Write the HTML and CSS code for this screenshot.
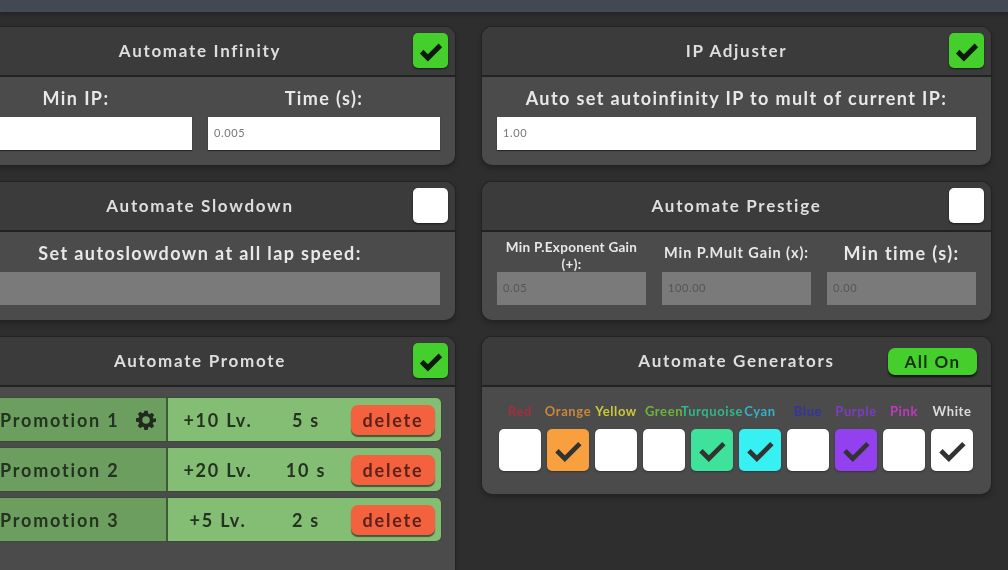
FILE: index.html
```html
<!DOCTYPE html>
<html lang="en">
<head>
<meta charset="utf-8">
<title>Automation</title>
<link rel="stylesheet" href="styles.css">
</head>
<body>
<div class="page">
  <div class="topbar"></div>
  <main class="columns">
    <section class="card">
      <header class="card-head"><h2>Automate Infinity</h2><span class="toggle on"><svg viewBox="0 0 24 24"><path d="M4.500 12.500 9.500 17.500 19.500 7.500"/></svg></span></header>
      <div class="card-body fields">
        <label class="field"><span class="field-label">Min IP:</span><span class="input"></span></label>
        <label class="field"><span class="field-label">Time (s):</span><span class="input">0.005</span></label>
      </div>
    </section>
    <section class="card">
      <header class="card-head"><h2>IP Adjuster</h2><span class="toggle on"><svg viewBox="0 0 24 24"><path d="M4.500 12.500 9.500 17.500 19.500 7.500"/></svg></span></header>
      <div class="card-body fields">
        <label class="field"><span class="field-label">Auto set autoinfinity IP to mult of current IP:</span><span class="input">1.00</span></label>
      </div>
    </section>
    <section class="card">
      <header class="card-head"><h2>Automate Slowdown</h2><span class="toggle"></span></header>
      <div class="card-body fields">
        <label class="field"><span class="field-label">Set autoslowdown at all lap speed:</span><span class="input off"></span></label>
      </div>
    </section>
    <section class="card">
      <header class="card-head"><h2>Automate Prestige</h2><span class="toggle"></span></header>
      <div class="card-body fields">
        <label class="field"><span class="field-label tiny">Min P.Exponent Gain (+):</span><span class="input off">0.05</span></label>
        <label class="field"><span class="field-label small">Min P.Mult Gain (x):</span><span class="input off">100.00</span></label>
        <label class="field"><span class="field-label">Min time (s):</span><span class="input off">0.00</span></label>
      </div>
    </section>
    <section class="card tall">
      <header class="card-head"><h2>Automate Promote</h2><span class="toggle on"><svg viewBox="0 0 24 24"><path d="M4.500 12.500 9.500 17.500 19.500 7.500"/></svg></span></header>
      <div class="card-body rows">
        <div class="promo">
          <div class="promo-name"><span>Promotion 1</span>
            <svg class="gear" viewBox="0 0 24 24"><path d="M10 1h4l.6 3.200 1.800.8 2.700-1.800 2.800 2.800-1.800 2.700.8 1.800L24 10v4l-3.200.6-.8 1.800 1.800 2.700-2.800 2.800-2.700-1.800-1.800.8L14 24h-4l-.6-3.200-1.800-.8-2.700 1.800-2.800-2.800 1.800-2.700-.8-1.800L0 14v-4l3.200-.6.8-1.800-1.800-2.700 2.800-2.800 2.700 1.800 1.800-.8zM12 7.500a4.500 4.500 0 1 0 0 9 4.500 4.500 0 0 0 0-9z" fill-rule="evenodd"/></svg>
          </div>
          <div class="promo-info"><span class="lv">+10 Lv.</span><span class="sec">5 s</span><span class="del">delete</span></div>
        </div>
        <div class="promo">
          <div class="promo-name"><span>Promotion 2</span></div>
          <div class="promo-info"><span class="lv">+20 Lv.</span><span class="sec">10 s</span><span class="del">delete</span></div>
        </div>
        <div class="promo">
          <div class="promo-name"><span>Promotion 3</span></div>
          <div class="promo-info"><span class="lv">+5 Lv.</span><span class="sec">2 s</span><span class="del">delete</span></div>
        </div>
      </div>
    </section>
    <section class="card gens">
      <header class="card-head"><h2>Automate Generators</h2><span class="all-on">All On</span></header>
      <div class="card-body swatches">
        <div class="gen"><span class="gen-name red">Red</span><span class="box"></span></div>
        <div class="gen"><span class="gen-name orange">Orange</span><span class="box b-orange"><svg viewBox="0 0 24 24"><path d="M5 12.500 10 17.500 19.500 8"/></svg></span></div>
        <div class="gen"><span class="gen-name yellow">Yellow</span><span class="box"></span></div>
        <div class="gen"><span class="gen-name green">Green</span><span class="box"></span></div>
        <div class="gen"><span class="gen-name turq">Turquoise</span><span class="box b-turq"><svg viewBox="0 0 24 24"><path d="M5 12.500 10 17.500 19.500 8"/></svg></span></div>
        <div class="gen"><span class="gen-name cyan">Cyan</span><span class="box b-cyan"><svg viewBox="0 0 24 24"><path d="M5 12.500 10 17.500 19.500 8"/></svg></span></div>
        <div class="gen"><span class="gen-name blue">Blue</span><span class="box"></span></div>
        <div class="gen"><span class="gen-name purple">Purple</span><span class="box b-purple"><svg viewBox="0 0 24 24"><path d="M5 12.500 10 17.500 19.500 8"/></svg></span></div>
        <div class="gen"><span class="gen-name pink">Pink</span><span class="box"></span></div>
        <div class="gen"><span class="gen-name white">White</span><span class="box"><svg viewBox="0 0 24 24"><path d="M5 12.500 10 17.500 19.500 8"/></svg></span></div>
      </div>
    </section>
  </main>
</div>
</body>
</html>
```
FILE: styles.css
```css
* { box-sizing: border-box; }
html, body { margin: 0; height: 100%; overflow: hidden; background: #2e2e2e; }
.page {
  width: 1008px; height: 570px; overflow: hidden; background: #2e2e2e;
  font-family: "Lato", "Liberation Sans", sans-serif;
  filter: blur(0.7px);
}
.topbar { height: 12px; background: #434953; box-shadow: 0 2px 4px #222; }
.columns {
  display: grid; grid-template-columns: 510px 509px; grid-template-rows: 138px 138px auto;
  column-gap: 27px; row-gap: 17px; margin: 15px 0 0 -55px; align-items: start;
}
.card {
  height: 138px; border-radius: 10px; overflow: hidden; background: #4b4b4b;
  box-shadow: 0 0 0 1px #232323, 0 3px 5px #222;
  display: flex; flex-direction: column;
}
.card.tall { height: 300px; }
.card.gens { height: 157px; }
.card-head {
  height: 50px; flex: none; padding-bottom: 2px; background: #3b3b3b; border-bottom: 2px solid #222;
  display: flex; align-items: center; justify-content: center; position: relative;
}
.card-head h2 {
  margin: 0; font-size: 17px; font-weight: 700; letter-spacing: 1.7px; color: #dedede;
}
.toggle {
  position: absolute; right: 7px; top: 6px; width: 35px; height: 35px; border-radius: 5px;
  background: #fff; display: flex; align-items: center; justify-content: center;
  box-shadow: 0 1px 2px #1c1c1c;
}
.toggle.on { background: #45cf2c; }
.toggle svg { width: 30px; height: 30px; }
.toggle svg path { fill: none; stroke: #0e1a0c; stroke-width: 4; }
.card-body { flex: 1; min-height: 0; }
.fields { display: flex; gap: 16px; padding: 7px 15px 0; }
.field { flex: 1 1 0; min-width: 0; display: flex; flex-direction: column; }
.field-label {
  height: 33px; padding-bottom: 5px; display: flex; align-items: center; justify-content: center; text-align: center;
  font-size: 18px; font-weight: 700; letter-spacing: 1.4px; color: #e8e8e8; line-height: 16px;
}
.field-label.small { font-size: 14.500px; letter-spacing: .9px; white-space: nowrap; }
.field-label.tiny { font-size: 13.500px; letter-spacing: .3px; padding-bottom: 0; line-height: 17px; }
.input {
  height: 33px; background: #fff; color: #777; font-size: 11px; letter-spacing: .6px;
  display: flex; align-items: center; padding: 0 0 2px 6px; box-shadow: 0 1px 1px #2a2a2a;
}
.input.off { background: #7a7a7a; color: #555; box-shadow: none; }
.rows { display: flex; flex-direction: column; gap: 7px; padding: 11px 14px 0; }
.promo {
  height: 43px; display: flex; border-radius: 5px; overflow: hidden; background: #84bd74;
  box-shadow: 0 0 0 1px #3c4c38;
}
.promo-name {
  width: 209px; flex: none; background: #6c9e5f; border-right: 2px solid #3f5a39; padding: 0 10px 0 41px;
  display: flex; align-items: center; justify-content: space-between;
  font-size: 18px; font-weight: 700; letter-spacing: 1.8px; color: #24331f;
}
.gear { width: 20px; height: 20px; fill: #20291d; }
.promo-info { flex: 1; display: flex; align-items: center; font-size: 18px; font-weight: 700; letter-spacing: 1.8px; color: #24331f; }
.lv { width: 100px; text-align: center; }
.sec { width: 76px; text-align: center; }
.del {
  width: 84px; height: 30px; margin-left: 7px; border-radius: 7px; background: #f4613f; color: #5a221a;
  display: flex; align-items: center; justify-content: center;
  box-shadow: 0 2px 1px #3f5a39;
}
.all-on {
  position: absolute; right: 14px; top: 11px; width: 89px; height: 27px; border-radius: 7px;
  background: #45cf2c; color: #14300e; font-size: 17px; font-weight: 700; letter-spacing: 1.4px;
  display: flex; align-items: center; justify-content: center; box-shadow: 0 2px 2px #111;
}
.swatches { display: flex; gap: 6px; padding: 11px 16px 0 17px; }
.gen { width: 42px; flex: none; display: flex; flex-direction: column; align-items: center; }
.gen-name { height: 25px; display: flex; align-items: center; font-size: 13px; font-weight: 700; letter-spacing: .6px; white-space: nowrap; }
.box {
  width: 42px; height: 42px; margin-top: 6px; border-radius: 5px; background: #fff;
  display: flex; align-items: center; justify-content: center; box-shadow: 0 1px 2px #333;
}
.box svg { width: 38px; height: 38px; }
.box svg path { fill: none; stroke: #333; stroke-width: 3; }
.b-orange { background: #f8a03e; }
.b-turq { background: #3fe29a; }
.b-cyan { background: #36f0f2; }
.b-purple { background: #9340ee; }
.red { color: #a3303f; }
.orange { color: #c9873c; }
.yellow { color: #c9c93a; }
.green { color: #6bb53c; }
.turq { color: #34b58a; }
.cyan { color: #32b4c4; }
.blue { color: #34349c; }
.purple { color: #7a3ec4; }
.pink { color: #c03ac0; }
.white { color: #dcdcdc; }
```
